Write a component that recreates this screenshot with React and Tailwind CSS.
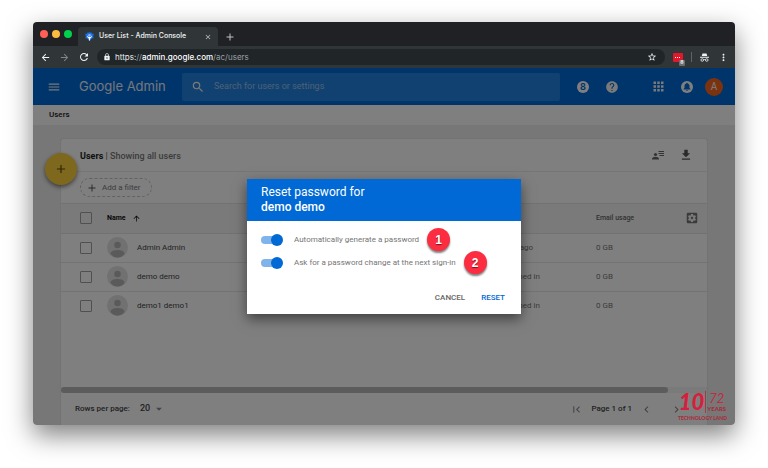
import React from 'react';
import {
    MdAdd, MdApps, MdArrowBack, MdArrowForward, MdArrowUpward, MdChevronLeft, MdChevronRight,
    MdClose, MdFileDownload, MdFirstPage, MdHelp, MdLock, MdMenu, MdMoreVert, MdRefresh,
    MdSearch, MdSettingsApplications, MdStarBorder, MdArrowDropDown,
} from 'react-icons/md';

const users = [
    { name: 'Admin Admin', signIn: '10 minutes ago', usage: '0 GB' },
    { name: 'demo demo', signIn: 'Has not signed in', usage: '0 GB' },
    { name: 'demo1 demo1', signIn: 'Has not signed in', usage: '0 GB' },
];

const options = [
    { id: 'auto-password', label: 'Automatically generate a password', step: 1 },
    { id: 'ask-change', label: 'Ask for a password change at the next sign-in', step: 2 },
];

function IconButton({ label, className = '', children }) {
    return (
        <button type="button" aria-label={label} className={`flex shrink-0 items-center justify-center ${className}`}>
            {children}
        </button>
    );
}

function TabStrip() {
    return (
        <div className="flex h-6 items-end bg-[#202124]">
            <div className="flex h-6 w-[45px] items-center gap-1 pl-[7px]">
                <span className="h-2 w-2 rounded-full bg-[#ff5f57]" />
                <span className="h-2 w-2 rounded-full bg-[#fdbc40]" />
                <span className="h-2 w-2 rounded-full bg-[#00d04b]" />
            </div>
            <div className="flex h-[19px] w-[140px] items-center rounded-t-[4px] bg-[#303638] pl-[7px] pr-1.5">
                <svg viewBox="0 0 16 16" className="h-[9px] w-[9px] shrink-0">
                    <path d="M4.500 1h7l1 2h3l-1 5 1 3h-3l-4.500 5L3.500 11h-3l1-3-1-5h3z" fill="#1a73e8" />
                    <path d="M4 6l2 3h4l2-3v3l-3 3v3H7v-3L4 9z" fill="#fff" />
                    <circle cx="8" cy="6" r="2.400" fill="#8ab4f8" />
                </svg>
                <span className="ml-[5px] flex-1 whitespace-nowrap text-[7px] font-medium text-[#f1f3f4]">User List - Admin Console</span>
                <IconButton label="Close tab" className="text-[#bdc1c6]"><MdClose size={8} /></IconButton>
            </div>
            <IconButton label="New tab" className="ml-1.5 h-[19px] text-[#bdc1c6]"><MdAdd size={12} /></IconButton>
        </div>
    );
}

function Toolbar() {
    return (
        <div className="flex h-[22px] items-center bg-[#303638] pl-[7px] pr-1.5 text-[#f1f3f4]">
            <IconButton label="Back"><MdArrowBack size={11} /></IconButton>
            <IconButton label="Forward" className="ml-2 text-[#80868b]"><MdArrowForward size={11} /></IconButton>
            <IconButton label="Reload" className="ml-2"><MdRefresh size={12} /></IconButton>
            <div className="ml-[7px] flex h-4 flex-1 items-center rounded-full bg-[#202527] pl-1.5 pr-2">
                <MdLock size={8} />
                <span className="ml-1 flex-1 whitespace-nowrap text-[8px] text-[#9aa0a6]">
                    <span className="text-[#e8eaed]">https:</span>//<span className="font-medium text-white">admin.google.com</span>/ac/users
                </span>
                <IconButton label="Bookmark this page"><MdStarBorder size={10} /></IconButton>
            </div>
            <div className="relative ml-2 h-[9px] w-[10px] rounded-[1px] bg-[#e3172b]">
                <div className="absolute left-0.5 top-1 flex gap-px">
                    <span className="h-px w-px bg-white" />
                    <span className="h-px w-px bg-white" />
                    <span className="h-px w-px bg-white" />
                </div>
                <span className="absolute -bottom-1 -right-0.5 flex h-[6px] w-[6px] items-center justify-center rounded-[1px] bg-[#696e71] text-[5px] font-bold leading-none">8</span>
            </div>
            <span className="ml-2 h-2.5 w-px bg-[#5f6368]" />
            <svg viewBox="0 0 18 18" className="ml-2 h-[9px] w-[9px]" fill="none" stroke="currentColor" strokeWidth="1.600">
                <path d="M5 1h8l1.500 5h-11zM0 7.500h18v2H0z" fill="currentColor" stroke="none" />
                <circle cx="4.500" cy="14" r="2.600" />
                <circle cx="13.500" cy="14" r="2.600" />
                <path d="M7 13.500q2-1 4 0" />
            </svg>
            <IconButton label="Chrome menu" className="ml-[9px]"><MdMoreVert size={11} /></IconButton>
        </div>
    );
}

function AppHeader() {
    return (
        <header className="flex h-[37px] items-center bg-[#006ad8] pl-[14px] pr-3 text-[#f4f4f4]">
            <IconButton label="Main menu"><MdMenu size={14} /></IconButton>
            <span className="ml-[18px] w-[103px] whitespace-nowrap text-[13px] text-[#e8eef6]">Google Admin</span>
            <label className="flex h-7 flex-1 items-center rounded-[2px] bg-[#2382e0] pl-[9px]">
                <MdSearch size={14} className="shrink-0" />
                <input
                    type="search"
                    aria-label="Search"
                    placeholder="Search for users or settings"
                    className="ml-[9px] min-w-0 flex-1 bg-transparent font-[Roboto] text-[9px] outline-none placeholder:text-[#99c3ee]"
                />
            </label>
            <IconButton label="Account status" className="ml-[17px] h-3 w-3 rounded-full bg-white">
                <span className="text-[9px] font-bold leading-none text-[#006ad8]">8</span>
            </IconButton>
            <IconButton label="Help" className="ml-4"><MdHelp size={14} /></IconButton>
            <IconButton label="Google apps" className="ml-8"><MdApps size={15} /></IconButton>
            <IconButton label="Notifications" className="ml-[15px]">
                <svg viewBox="0 0 24 24" className="h-3 w-3">
                    <circle cx="12" cy="12" r="12" fill="#fff" />
                    <path d="M12 3.500a1.500 1.500 0 0 0-1.500 1.500C8 5.700 7 8 7 10v4l-2 2v1h14v-1l-2-2v-4c0-2-1-4.300-3.500-5A1.500 1.500 0 0 0 12 3.500zM10.300 18a1.700 1.700 0 0 0 3.400 0z" fill="#006ad8" />
                </svg>
            </IconButton>
            <IconButton label="Account" className="ml-3 h-[18px] w-[18px] rounded-full bg-[#f4641e] font-[Roboto] text-[10px]">A</IconButton>
        </header>
    );
}

function Avatar() {
    return (
        <svg viewBox="0 0 42 42" className="block h-[21px] w-[21px]">
            <circle cx="21" cy="21" r="21" fill="#e2e2e2" />
            <circle cx="21" cy="16" r="6.500" fill="#b4b4b4" />
            <path d="M7 34q0-8 14-8t14 8q-6 7-14 7T7 34z" fill="#b4b4b4" />
        </svg>
    );
}

function RowCheckbox({ label }) {
    return <input type="checkbox" aria-label={label} className="block h-3 w-3 appearance-none rounded-[1px] border border-[#a0a0a0]" />;
}

function UsersCard() {
    return (
        <main className="relative mx-7 mt-3.5 flex flex-1 flex-col rounded-t-[2px] bg-white shadow-[0_0_1px_rgba(0,0,0,0.3)]">
            <button type="button" aria-label="Add new user" className="absolute -left-4 top-3.5 flex h-8 w-8 items-center justify-center rounded-full bg-[#fdd13a] text-[#5a4a14] shadow-[0_2px_4px_rgba(0,0,0,0.5)]">
                <MdAdd size={14} />
            </button>
            <div className="flex h-[33px] items-center border-b border-[#ececec] pl-[19px] pr-3.5">
                <h1 className="flex-1 pt-1 text-[9px] font-medium text-[#777]"><span className="font-bold text-[#222]">Users</span> | Showing all users</h1>
                <IconButton label="Manage columns" className="text-[#666]">
                    <svg viewBox="0 0 24 18" className="h-[9px] w-3" fill="currentColor">
                        <circle cx="7" cy="7" r="3.200" />
                        <path d="M0 17v-2q1-3.500 7-3.500t7 3.500v2zM13 0h11v2H13zM13 4h11v2H13zM15 8h9v2h-9z" />
                    </svg>
                </IconButton>
                <IconButton label="Download users" className="ml-[15px] text-[#555]"><MdFileDownload size={14} /></IconButton>
            </div>
            <div className="flex h-8 items-center border-b border-[#e4e4e4] pl-[19px]">
                <button type="button" className="flex h-[19px] items-center gap-1 rounded-full border border-dashed border-[#c4c4c4] pl-[5px] pr-1.5 text-[8px] text-[#777]">
                    <MdAdd size={12} className="text-[#555]" />
                    <span className="pr-1">Add a filter</span>
                </button>
            </div>
            <table className="w-full table-fixed border-collapse text-left text-[8px] text-[#444]">
                <colgroup>
                    <col className="w-[46px]" />
                    <col />
                    <col className="w-[65px]" />
                    <col className="w-[53px]" />
                    <col className="w-[89px]" />
                    <col className="w-[22px]" />
                </colgroup>
                <thead>
                    <tr className="h-[29px] border-b border-[#e4e4e4] bg-[#f4f4f4] text-[7px]">
                        <th className="pl-[19px]"><RowCheckbox label="Select all" /></th>
                        <th className="text-[#111]"><span className="flex items-center gap-1.5">Name <MdArrowUpward size={9} /></span></th>
                        <th colSpan={2}>Last sign in</th>
                        <th className="font-medium text-[#666]">Email usage</th>
                        <th><IconButton label="Column settings" className="text-[#777]"><MdSettingsApplications size={14} /></IconButton></th>
                    </tr>
                </thead>
                <tbody>
                    {users.map((user) => (
                        <tr key={user.name} className="h-[29px] border-b border-[#e6e6e6] last:border-b-0">
                            <td className="pl-[19px]"><RowCheckbox label={`Select ${user.name}`} /></td>
                            <td><span className="flex items-center gap-[9px] text-[#444]"><Avatar />{user.name}</span></td>
                            <td colSpan={2} className="text-[#777]">{user.signIn}</td>
                            <td className="text-[#777]">{user.usage}</td>
                            <td />
                        </tr>
                    ))}
                </tbody>
            </table>
            <div className="mt-auto h-1.5 bg-[#f4f4f4]"><div className="h-1.5 w-[94%] rounded-full bg-[#b9b9b9]" /></div>
            <footer className="flex h-8 items-center pl-3.5 pr-6 text-[8px] font-medium text-[#444]">
                <label htmlFor="rows">Rows per page:</label>
                <span className="relative ml-2.5 flex items-center">
                    <select id="rows" defaultValue="20" className="w-[22px] appearance-none bg-transparent text-[9px] outline-none"><option>20</option></select>
                    <MdArrowDropDown size={14} className="pointer-events-none absolute -right-1 text-[#888]" />
                </span>
                <span className="flex-1" />
                <IconButton label="First page" className="text-[#888]"><MdFirstPage size={13} /></IconButton>
                <span className="ml-2">Page 1 of 1</span>
                <IconButton label="Previous page" className="ml-2 text-[#888]"><MdChevronLeft size={13} /></IconButton>
                <IconButton label="Next page" className="ml-[17px] text-[#888]"><MdChevronRight size={13} /></IconButton>
            </footer>
        </main>
    );
}

function ResetDialog() {
    return (
        <div className="absolute inset-0 flex items-start justify-center bg-black/50 pt-[111px]">
            <section role="dialog" aria-labelledby="reset-title" className="w-[274px] bg-white shadow-[0_5px_12px_rgba(0,0,0,0.5)]">
                <h2 id="reset-title" className="bg-[#0069d5] px-3.5 py-1.5 text-[12px] leading-[15px] text-white">
                    Reset password for<br /><span className="font-medium">demo demo</span>
                </h2>
                <div className="px-3.5 pt-[7px]">
                    {options.map((option) => (
                        <div key={option.id} className="flex h-[23px] items-center">
                            <input
                                id={option.id}
                                type="checkbox"
                                role="switch"
                                defaultChecked
                                className="relative h-2 w-5 appearance-none rounded-full bg-[#7fb3ea] before:absolute before:-right-0.5 before:-top-0.5 before:h-3 before:w-3 before:rounded-full before:bg-[#0069d5]"
                            />
                            <label htmlFor={option.id} className="ml-[13px] text-[8px] text-[#757575]">{option.label}</label>
                            <span className="ml-2 flex h-[23px] w-[23px] items-center justify-center rounded-full bg-[#fc2d41] font-['Liberation_Sans'] text-[12px] font-bold text-white shadow-[0_2px_2px_rgba(0,0,0,0.5)] [text-shadow:0_1px_1px_#7a1020]">{option.step}</span>
                        </div>
                    ))}
                </div>
                <div className="mt-2 flex h-8 items-center justify-end gap-4 pr-4 text-[8px] font-medium">
                    <button type="button" className="leading-[10px] text-[#666]">CANCEL</button>
                    <button type="button" className="leading-[10px] text-[#0069d5]">RESET</button>
                </div>
            </section>
        </div>
    );
}

function Watermark() {
    return (
        <div className="absolute bottom-[3px] right-2 flex flex-col items-center font-['Lato'] text-[#a82c3b]">
            <div className="flex items-center">
                <span className="text-[22px] font-black italic leading-[27px] text-[#d51f3c]">10</span>
                <div className="ml-px flex flex-col items-center border-l border-[#a13b46] pl-px">
                    <span className="text-[13px] italic leading-[14px] text-[#c42a40]">72</span>
                    <span className="text-[6px] font-black leading-[8px]">YEARS</span>
                </div>
            </div>
            <span className="whitespace-nowrap text-[5px] font-black leading-[7px]">TECHNOLOGY LAND</span>
        </div>
    );
}

export default function App() {
    return (
        <div className="min-h-screen bg-white px-[33px] pb-11 pt-[22px] font-[Inter,sans-serif]">
            <div className="rounded-[4px] shadow-[0_10px_26px_rgba(0,0,0,0.5)]">
                <div className="overflow-hidden rounded-[4px]">
                    <TabStrip />
                    <Toolbar />
                    <div className="relative">
                        <AppHeader />
                        <div className="font-[Roboto,sans-serif]">
                            <nav className="flex h-5 items-center bg-white px-4 text-[8px] font-medium text-[#222] shadow-[0_1px_2px_rgba(0,0,0,0.3)]">
                                <a href="#users">Users</a>
                            </nav>
                            <div className="flex min-h-[300px] flex-col bg-[#eee]">
                                <UsersCard />
                            </div>
                            {/* Dialog with its page backdrop */}
                            <ResetDialog />
                        </div>
                        <Watermark />
                    </div>
                </div>
            </div>
        </div>
    );
}
